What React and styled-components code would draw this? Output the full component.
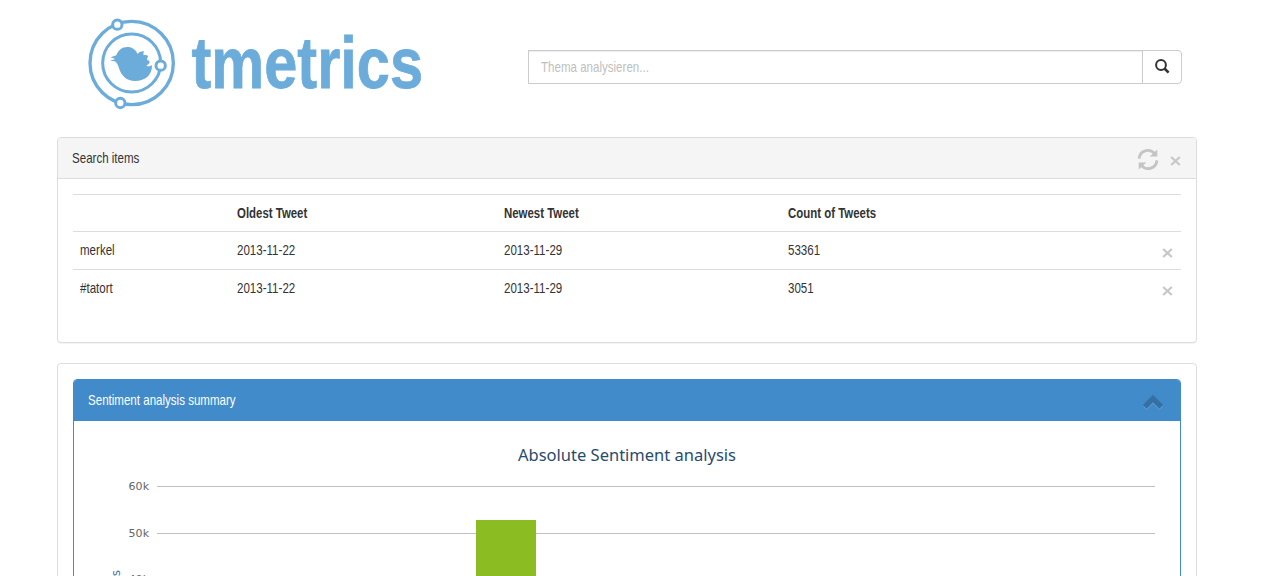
import React from 'react';
import styled, { createGlobalStyle } from 'styled-components';

const GlobalStyle = createGlobalStyle`
  * { box-sizing: border-box; }
  html, body { margin: 0; height: 576px; overflow: hidden; background: #fff; }
  body {
    font-family: "Liberation Sans", Arial, sans-serif;
    font-size: 15px;
    line-height: 20px;
    color: #333;
  }
`;

const Page = styled.div`
  width: 1140px;
  height: 576px;
  margin-left: 57px;
  overflow: hidden;
`;

const Header = styled.header`
  display: flex;
  height: 137px;
  padding: 10px 15px 0 23px;
`;

const LogoArt = styled.svg`
  display: block;
  width: 350px;
  height: 110px;
  margin-right: 98px;
  flex: none;
`;

const SearchForm = styled.form`
  display: flex;
  flex: 1;
  height: 34px;
  margin: 40px 0 0;
`;

const SearchField = styled.div`
  flex: 1;
  min-width: 0;
  overflow: hidden;
  padding-left: 12px;
  border: 1px solid #ccc;
  box-shadow: inset 0 1px 1px rgba(0, 0, 0, 0.075);
`;

const SearchInput = styled.input`
  display: block;
  width: 125%;
  height: 32px;
  padding: 0 0 2px;
  border: 0;
  background: transparent;
  font: inherit;
  transform: scaleX(0.77);
  transform-origin: left;
  outline: none;
  &::placeholder { color: #c0c0c0; opacity: 1; }
`;

const SearchButton = styled.button`
  display: flex;
  align-items: center;
  justify-content: center;
  width: 40px;
  margin-left: -1px;
  padding: 0 0 2px;
  border: 1px solid #ccc;
  border-radius: 0 4px 4px 0;
  background: #fff;
`;

const Icon = styled.svg`
  display: block;
  flex: none;
`;

const Condensed = styled.span`
  display: block;
  white-space: nowrap;
  transform: scaleX(${(p) => p.$scale || 0.77});
  transform-origin: left;
`;

const Panel = styled.section`
  height: ${(p) => p.$height}px;
  margin-bottom: 20px;
  border: 1px solid #ddd;
  border-radius: 4px;
  background: #fff;
  box-shadow: 0 1px 1px rgba(0, 0, 0, 0.05);
`;

const PanelHeading = styled.div`
  display: flex;
  justify-content: space-between;
  height: 41px;
  padding: 10px 15px 0 14px;
  border-bottom: 1px solid #ddd;
  border-radius: 3px 3px 0 0;
  background: #f5f5f5;
`;

const HeadingActions = styled.div`
  display: flex;
  gap: 11px;
`;

const PanelBody = styled.div`
  padding: 15px;
`;

const Row = styled.div`
  display: grid;
  grid-template-columns: 157px 267px 283.5px 1fr auto;
  height: ${(p) => p.$height}px;
  padding: 8px 8px 0 7px;
  border-top: 1px solid #ddd;
  font-weight: ${(p) => (p.$head ? 700 : 400)};
`;

const RowAction = styled.div`
  padding-top: 8px;
`;

const ChartPanel = styled.section`
  height: 420px;
  border: 1px solid #428bca;
  border-radius: 4px;
`;

const ChartHeading = styled.div`
  display: flex;
  justify-content: space-between;
  height: 41px;
  padding: 10px 17px 0 14px;
  border-radius: 3px 3px 0 0;
  background: #428bca;
  color: #fff;
`;

const Chart = styled.svg`
  display: block;
  width: 1106px;
  height: 378px;
  font-family: "DejaVu Sans", sans-serif;
`;

function Logo() {
  return (
    <LogoArt viewBox="0 0 350 110" aria-label="tmetrics">
      <g transform="scale(.33333)" fill="none" stroke="#6cacdb">
        <circle cx="155" cy="159" r="125" strokeWidth="10" />
        <circle cx="155" cy="159" r="87" strokeWidth="9" />
        <g fill="#fff" strokeWidth="9">
          <circle cx="112" cy="44" r="14" />
          <circle cx="242" cy="167" r="14" />
          <circle cx="121" cy="279" r="14" />
        </g>
        <path
          fill="#6cacdb"
          stroke="none"
          d="M90 152 L106 147 L92 142 L109 136 C114 121 126 111 142 111 C157 111 167 119 173 132 C177 126 184 123 192 124 C190 129 190 132 191 136 C196 134 200 135 205 138 C201 143 201 147 202 151 C206 151 208 153 209 157 C207 162 203 165 199 167 C202 170 211 169 216 165 C217 194 197 213 165 213 C140 213 124 198 117 175 C114 164 110 157 104 154 Z"
        />
      </g>
      <text x="111.5" y="77.5" fontSize="72" fontWeight="700" fill="#6cacdb" stroke="#6cacdb" strokeWidth=".8" textLength="231.5" lengthAdjust="spacingAndGlyphs">
        tmetrics
      </text>
    </LogoArt>
  );
}

function SearchIcon() {
  return (
    <Icon width="15" height="15" viewBox="0 0 15 15" fill="none" stroke="#333">
      <circle cx="6" cy="6" r="4.9" strokeWidth="2" />
      <path d="M9.5 9.5 L13.6 13.6" strokeWidth="2.6" />
    </Icon>
  );
}

function RefreshIcon() {
  return (
    <Icon width="22" height="22" viewBox="0 -.5 22 22" overflow="visible">
      <g fill="none" stroke="#c4c4c4" strokeWidth="2.8">
        <path d="M2.1 10.2 A8.8 8.8 0 0 1 17.6 5.1" />
        <path d="M19.9 11.8 A8.8 8.8 0 0 1 4.4 16.9" />
      </g>
      <path d="M20.3 1 V8 H12.7 Z M1.7 21 V14 H9.3 Z" fill="#c4c4c4" />
    </Icon>
  );
}

function CloseIcon({ top = 0 }) {
  return (
    <Icon width="11" height="10" viewBox={`0 ${-top} 11 10`} overflow="visible" stroke="#c8c8c8" strokeWidth="2.3">
      <path d="M1.2 1 L9.8 9 M9.8 1 L1.2 9" />
    </Icon>
  );
}

function ChevronUp() {
  return (
    <Icon width="20" height="17" viewBox="0 -2 20 17" overflow="visible" fill="none" strokeWidth="5.4">
      <path d="M1.8 15.8 L10 7.6 L18.2 15.8" stroke="#68a2d5" />
      <path d="M1.8 14.8 L10 6.6 L18.2 14.8" stroke="#3570a2" />
    </Icon>
  );
}

const topics = [
  { name: 'merkel', oldest: '2013-11-22', newest: '2013-11-29', count: 53361 },
  { name: '#tatort', oldest: '2013-11-22', newest: '2013-11-29', count: 3051 },
];

const columns = ['Oldest Tweet', 'Newest Tweet', 'Count of Tweets'];

const ticks = [
  { label: '60k', y: 65.5 },
  { label: '50k', y: 112.5 },
  { label: '40k', y: 158.5 },
];

export default function App() {
  return (
    <Page>
      <GlobalStyle />
      <Header>
        <Logo />
        <SearchForm>
          <SearchField>
            <SearchInput placeholder="Thema analysieren..." />
          </SearchField>
          <SearchButton type="button" aria-label="Search"><SearchIcon /></SearchButton>
        </SearchForm>
      </Header>
      <Panel $height={206}>
        <PanelHeading>
          <Condensed>Search items</Condensed>
          <HeadingActions>
            <RefreshIcon />
            <CloseIcon top={8} />
          </HeadingActions>
        </PanelHeading>
        <PanelBody>
          <Row $head $height={37}>
            <span />
            {columns.map((c) => <Condensed key={c} $scale={0.762}>{c}</Condensed>)}
          </Row>
          {topics.map((t) => (
            <Row key={t.name} $height={38}>
              <Condensed>{t.name}</Condensed>
              <Condensed>{t.oldest}</Condensed>
              <Condensed>{t.newest}</Condensed>
              <Condensed>{t.count}</Condensed>
              <RowAction><CloseIcon /></RowAction>
            </Row>
          ))}
        </PanelBody>
      </Panel>
      <Panel $height={460}>
        <PanelBody>
          <ChartPanel>
            <ChartHeading>
              <Condensed>Sentiment analysis summary</Condensed>
              <ChevronUp />
            </ChartHeading>
            <Chart viewBox="0 0 1106 378">
              <text x="444" y="40" fontSize="16.5" fontFamily="Noto Sans, sans-serif" fill="#274b6d" textLength="218">Absolute Sentiment analysis</text>
              {ticks.map((t) => (
                <g key={t.label}>
                  <path d={`M83 ${t.y} H1081`} stroke="#c0c0c0" />
                  <text x="54.5" y={t.y + 3} fontSize="11" fill="#666" textLength="20.5">{t.label}</text>
                </g>
              ))}
              <rect x="402" y="99" width="60" height="279" fill="#8bbc21" />
              <text transform="translate(45.5 215) rotate(-90)" fontSize="12" fill="#4d759e" textAnchor="end" x="66">Tweets</text>
            </Chart>
          </ChartPanel>
        </PanelBody>
      </Panel>
    </Page>
  );
}
